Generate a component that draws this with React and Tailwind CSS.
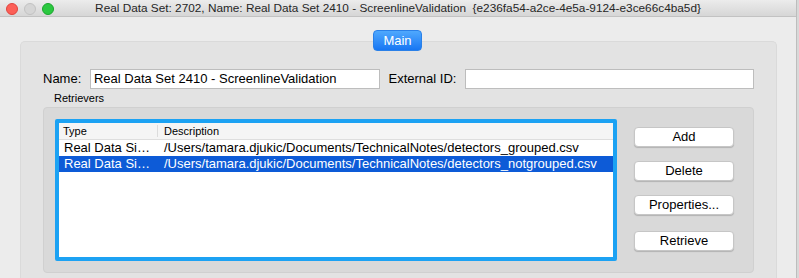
import React from "react";

const font = { fontFamily: '"Liberation Sans", Arial, sans-serif' };

function Btn({ children }) {
  return (
    <button className="w-[100px] h-[20px] rounded-[4px] bg-white border border-[#c6c6c6] shadow-[0_1px_1px_rgba(0,0,0,0.18)] text-[13px] leading-[18px] text-black flex items-center justify-center">
      {children}
    </button>
  );
}

export default function App() {
  return (
    <div className="w-[799px] h-[278px] flex overflow-hidden bg-[#d8d8d8]" style={font}>
      <div className="w-[797px] h-full flex flex-col bg-[#ececec] border-r border-[#bdbdbd]">
        {/* title bar */}
        <div className="relative h-[17px] shrink-0 bg-gradient-to-b from-[#ececec] to-[#d6d6d6] border-b border-[#c2c2c2] flex items-center justify-center">
          <div className="absolute left-[6px] top-[3px] flex gap-[6px]">
            <div className="w-[12px] h-[12px] rounded-full bg-[#fc5f57] border border-[#e0443e]" />
            <div className="w-[12px] h-[12px] rounded-full bg-[#d5d5d5] border border-[#c2c2c2]" />
            <div className="w-[12px] h-[12px] rounded-full bg-[#2bc840] border border-[#1ba52e]" />
          </div>
          <span className="text-[11.8px] leading-[16px] text-[#262626] whitespace-pre">
            {"Real Data Set: 2702, Name: Real Data Set 2410 - ScreenlineValidation  {e236fa54-a2ce-4e5a-9124-e3ce66c4ba5d}"}
          </span>
        </div>
        {/* body */}
        <div className="relative flex-1 pt-[24px] pl-[20px] pr-[19px]">
          <div className="absolute left-[373px] top-[13px] w-[49px] h-[21px] rounded-[4px] bg-gradient-to-b from-[#4fa8fd] to-[#1676f3] border border-[#2a80e8] text-white text-[13px] leading-[19px] flex items-center justify-center">
            Main
          </div>
          <div className="h-full rounded-t-[5px] bg-[#e3e3e3] border border-[#dadada] border-b-0 px-[22px] pt-[27px]">
            <div className="flex items-center h-[20px]">
              <span className="text-[13px] text-black w-[47px]">Name:</span>
              <div className="w-[290px] h-[20px] bg-white border border-[#bdbdbd] px-[3px] text-[13px] leading-[18px] text-black">
                Real Data Set 2410 - ScreenlineValidation
              </div>
              <span className="text-[13px] text-black ml-[9px] w-[77px]">External ID:</span>
              <div className="w-[289px] h-[20px] bg-white border border-[#bdbdbd]" />
            </div>
            <div className="text-[11px] leading-[13px] text-black pl-[11px] mt-[3px] h-[15px]">Retrievers</div>
            <div className="h-[166px] rounded-[4px] bg-[#d9d9d9] border border-[#d0d0d0] flex pl-[11px] pt-[11px]">
              <div className="w-[562px] h-[142px] border-[4px] border-[#1ca2f3] rounded-[2px] bg-white flex flex-col">
                <div className="h-[17px] bg-[#f5f5f5] border-b border-[#dedede] flex text-[11px] leading-[16px] text-black">
                  <div className="w-[99px] pl-[4px] border-r border-[#dcdcdc] my-[2px] leading-[12px]">Type</div>
                  <div className="pl-[6px] leading-[16px]">Description</div>
                </div>
                <div className="h-[16px] flex text-[13px] leading-[16px] text-black">
                  <div className="w-[100px] pl-[5px] whitespace-nowrap">Real Data Si…</div>
                  <div className="pl-[5px] whitespace-nowrap">/Users/tamara.djukic/Documents/TechnicalNotes/detectors_grouped.csv</div>
                </div>
                <div className="h-[16px] flex text-[13px] leading-[16px] text-white bg-[#0d5bd7]">
                  <div className="w-[100px] pl-[5px] whitespace-nowrap">Real Data Si…</div>
                  <div className="pl-[5px] whitespace-nowrap">/Users/tamara.djukic/Documents/TechnicalNotes/detectors_notgrouped.csv</div>
                </div>
              </div>
              <div className="ml-[17px] pt-[8px] flex flex-col gap-[14px]">
                <Btn>Add</Btn>
                <Btn>Delete</Btn>
                <Btn>Properties...</Btn>
                <div className="mt-[2px]"><Btn>Retrieve</Btn></div>
              </div>
            </div>
          </div>
        </div>
      </div>
    </div>
  );
}
